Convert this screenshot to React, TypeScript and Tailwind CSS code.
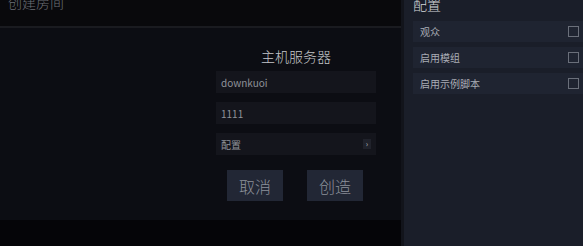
import React from "react";

const FONT = { fontFamily: '"Noto Sans CJK SC", "Noto Sans", sans-serif' };

function CheckRow({ label }: { label: string }) {
  return (
    <div className="flex h-[21px] items-center justify-between bg-[#1f2431] pl-[7px] pr-[4px]">
      <span className="text-[10px] leading-none text-[#a9adb5]">{label}</span>
      <span className="h-[11px] w-[11px] border border-[#6a6f7a]" />
    </div>
  );
}

export default function App() {
  return (
    <div className="flex h-[246px] w-[583px] overflow-hidden bg-[#0a0a0d]" style={FONT}>
      {/* Left: create room */}
      <div className="flex w-[401px] flex-col">
        <div className="h-[28px] shrink-0 overflow-hidden border-b-2 border-[#1a1b20] bg-[#09090c] pl-[8px]">
          <div className="-mt-[8px] text-[14px] font-light leading-[20px] text-[#6c6f76]">创建房间</div>
        </div>
        <div className="flex flex-1 flex-col bg-[#0c0d13] pl-[216px] pt-[18px]">
          <div className="w-[160px]">
            <div className="text-center text-[14px] font-light leading-[20px] text-[#c4c6ca]">主机服务器</div>
            <div className="mt-[5px] flex flex-col gap-[9px]">
              <div className="flex h-[22px] items-center bg-[#14151c] px-[5px] text-[10px] text-[#8f9299]">downkuoi</div>
              <div className="flex h-[22px] items-center bg-[#14151c] px-[5px] text-[10px] text-[#8f9299]">1111</div>
              <div className="flex h-[22px] items-center justify-between bg-[#14151c] px-[5px] text-[10px] text-[#8f9299]">
                <span>配置</span>
                <span className="flex h-[10px] w-[8px] items-center justify-center bg-[#20222b] text-[8px] leading-none text-[#b5b7bc]">›</span>
              </div>
            </div>
          </div>
          <div className="mt-[15px] flex gap-[24px] pl-[11px]">
            <div className="flex h-[31px] w-[56px] items-center justify-center bg-[#222735] text-[16px] font-light text-[#8c919b]">取消</div>
            <div className="flex h-[31px] w-[56px] items-center justify-center bg-[#222735] text-[16px] font-light text-[#8c919b]">创造</div>
          </div>
        </div>
        <div className="h-[26px] shrink-0 bg-[#050508]" />
      </div>

      {/* Right: config panel */}
      <div className="flex flex-1 flex-col border-l-[3px] border-[#12141b] bg-[#1a1e29] pl-[9px]">
        <div className="-mt-[6px] text-[14px] font-light leading-[20px] text-[#d4d6da]">配置</div>
        <div className="mt-[7px] flex flex-col gap-[5px]">
          <CheckRow label="观众" />
          <CheckRow label="启用模组" />
          <CheckRow label="启用示例脚本" />
        </div>
      </div>
    </div>
  );
}
